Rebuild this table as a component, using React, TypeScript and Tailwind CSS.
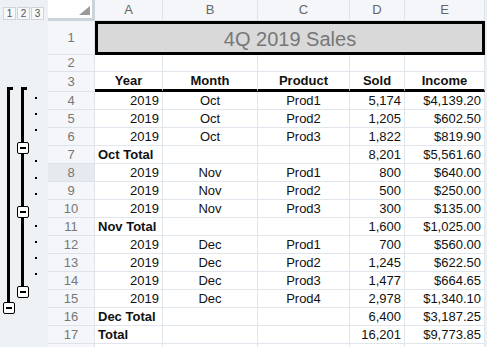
import React from 'react'

type Row = {
  n: number
  a: string
  b?: string
  c?: string
  d: string
  e: string
  total?: boolean
}

const rows: Row[] = [
  { n: 4, a: '2019', b: 'Oct', c: 'Prod1', d: '5,174', e: '$4,139.20' },
  { n: 5, a: '2019', b: 'Oct', c: 'Prod2', d: '1,205', e: '$602.50' },
  { n: 6, a: '2019', b: 'Oct', c: 'Prod3', d: '1,822', e: '$819.90' },
  { n: 7, a: 'Oct Total', d: '8,201', e: '$5,561.60', total: true },
  { n: 8, a: '2019', b: 'Nov', c: 'Prod1', d: '800', e: '$640.00' },
  { n: 9, a: '2019', b: 'Nov', c: 'Prod2', d: '500', e: '$250.00' },
  { n: 10, a: '2019', b: 'Nov', c: 'Prod3', d: '300', e: '$135.00' },
  { n: 11, a: 'Nov Total', d: '1,600', e: '$1,025.00', total: true },
  { n: 12, a: '2019', b: 'Dec', c: 'Prod1', d: '700', e: '$560.00' },
  { n: 13, a: '2019', b: 'Dec', c: 'Prod2', d: '1,245', e: '$622.50' },
  { n: 14, a: '2019', b: 'Dec', c: 'Prod3', d: '1,477', e: '$664.65' },
  { n: 15, a: '2019', b: 'Dec', c: 'Prod4', d: '2,978', e: '$1,340.10' },
  { n: 16, a: 'Dec Total', d: '6,400', e: '$3,187.25', total: true },
  { n: 17, a: 'Total', d: '16,201', e: '$9,773.85', total: true },
]

const dots = [97, 113, 129, 160, 177, 193, 225, 241, 257, 273]
const level2Boxes = [142, 206, 286]

const MinusBox = ({ top, left }: { top: number; left: number }) => (
  <div
    className="absolute flex h-[12px] w-[12px] items-center justify-center rounded-[2px] border-[1.5px] border-black bg-white"
    style={{ top, left }}
  >
    <div className="h-[2px] w-[6px] bg-black" />
  </div>
)

const Outline = () => (
  <div className="relative w-[48px] shrink-0">
    <div className="absolute left-[3px] top-[7px] flex gap-[1px]">
      {['1', '2', '3'].map((l) => (
        <div
          key={l}
          className="flex h-[13px] w-[13px] items-center justify-center border border-[#cfd5dc] bg-[#f7f8fa] text-[10px] leading-none text-[#555]"
        >
          {l}
        </div>
      ))}
    </div>

    {/* level 1 bracket */}
    <div className="absolute left-[7px] top-[87px] h-[216px] w-[3px] bg-black" />
    <div className="absolute left-[7px] top-[87px] h-[3px] w-[6px] bg-black" />
    <MinusBox top={302} left={3} />

    {/* level 2 bracket */}
    <div className="absolute left-[21px] top-[87px] h-[200px] w-[3px] bg-black" />
    <div className="absolute left-[21px] top-[87px] h-[3px] w-[6px] bg-black" />
    {level2Boxes.map((t) => (
      <MinusBox key={t} top={t} left={17} />
    ))}

    {dots.map((t) => (
      <div key={t} className="absolute left-[35px] h-[2px] w-[2px] bg-black" style={{ top: t }} />
    ))}
  </div>
)

const cols = ['A', 'B', 'C', 'D', 'E']
const colW = ['w-[68px]', 'w-[95px]', 'w-[92px]', 'w-[55px]', 'w-[80px]']

const RowHead = ({ n, h, active }: { n?: number; h: string; active?: boolean }) => (
  <div
    className={`${h} flex w-[47px] shrink-0 items-center justify-center border-r border-b border-[#dde3ea] text-[#777] ${
      active ? 'bg-[#e6e9ed]' : 'bg-[#f4f6f9]'
    }`}
  >
    {n}
  </div>
)

const Cell = ({
  w,
  align,
  bold,
  children,
  thick,
}: {
  w: string
  align: 'left' | 'center' | 'right'
  bold?: boolean
  thick?: boolean
  children?: React.ReactNode
}) => (
  <div
    className={`${w} flex h-full shrink-0 items-center overflow-hidden whitespace-nowrap border-r border-[#e1e6ec] bg-white px-[3px] text-[#111] ${
      thick ? 'border-b-[3px] border-b-black' : 'border-b'
    } ${align === 'left' ? 'justify-start' : align === 'center' ? 'justify-center' : 'justify-end'} ${
      bold ? 'font-bold' : ''
    }`}
  >
    {children}
  </div>
)

export default function App() {
  return (
    <div className="flex h-[347px] w-[487px] overflow-hidden bg-[#eef1f3] font-['Liberation_Sans',Arial,sans-serif] text-[13px]">
      <Outline />
      <div className="flex flex-col">
        {/* column headers */}
        <div className="flex h-[21px] shrink-0">
          <div className="relative h-[21px] w-[47px] shrink-0 border-r-[3px] border-b-[3px] border-[#cdd3da] bg-white">
            <svg className="absolute right-[2px] top-[6px]" width="11" height="9" viewBox="0 0 11 9">
              <polygon points="11,0 11,9 0,9" fill="#9a9a9a" />
            </svg>
          </div>
          {cols.map((c, i) => (
            <div
              key={c}
              className={`${colW[i]} flex shrink-0 items-center justify-center border-r border-b border-[#dde3ea] bg-[#f4f6f9] text-[#666]`}
            >
              {c}
            </div>
          ))}
        </div>

        {/* row 1: title */}
        <div className="flex h-[34px] shrink-0">
          <RowHead n={1} h="h-[34px]" />
          <div className="flex h-[34px] w-[390px] shrink-0 items-center justify-center border-[3px] border-black bg-[#d9d9d9] pt-[1px] text-[20px] text-[#777]">
            4Q 2019 Sales
          </div>
        </div>

        {/* row 2: empty */}
        <div className="flex h-[17px] shrink-0">
          <RowHead n={2} h="h-[17px]" />
          {colW.map((w) => (
            <Cell key={w} w={w} align="left" />
          ))}
        </div>

        {/* row 3: headings */}
        <div className="flex h-[20px] shrink-0">
          <RowHead n={3} h="h-[20px]" />
          <Cell w={colW[0]} align="center" bold thick>
            Year
          </Cell>
          <Cell w={colW[1]} align="center" bold thick>
            Month
          </Cell>
          <Cell w={colW[2]} align="center" bold thick>
            Product
          </Cell>
          <Cell w={colW[3]} align="center" bold thick>
            Sold
          </Cell>
          <Cell w={colW[4]} align="center" bold thick>
            Income
          </Cell>
        </div>

        {rows.map((r) => (
          <div key={r.n} className="flex h-[18px] shrink-0">
            <RowHead n={r.n} h="h-[18px]" active={r.n === 8} />
            <Cell w={colW[0]} align={r.total ? 'left' : 'right'} bold={r.total}>
              {r.a}
            </Cell>
            <Cell w={colW[1]} align="center">
              {r.b}
            </Cell>
            <Cell w={colW[2]} align="center">
              {r.c}
            </Cell>
            <Cell w={colW[3]} align="right">
              {r.d}
            </Cell>
            <Cell w={colW[4]} align="right">
              {r.e}
            </Cell>
          </div>
        ))}

        {/* next row, only its top edge shows */}
        <div className="flex h-[18px] shrink-0">
          <RowHead h="h-[18px]" />
          {colW.map((w) => (
            <Cell key={w} w={w} align="left" />
          ))}
        </div>
      </div>
    </div>
  )
}
